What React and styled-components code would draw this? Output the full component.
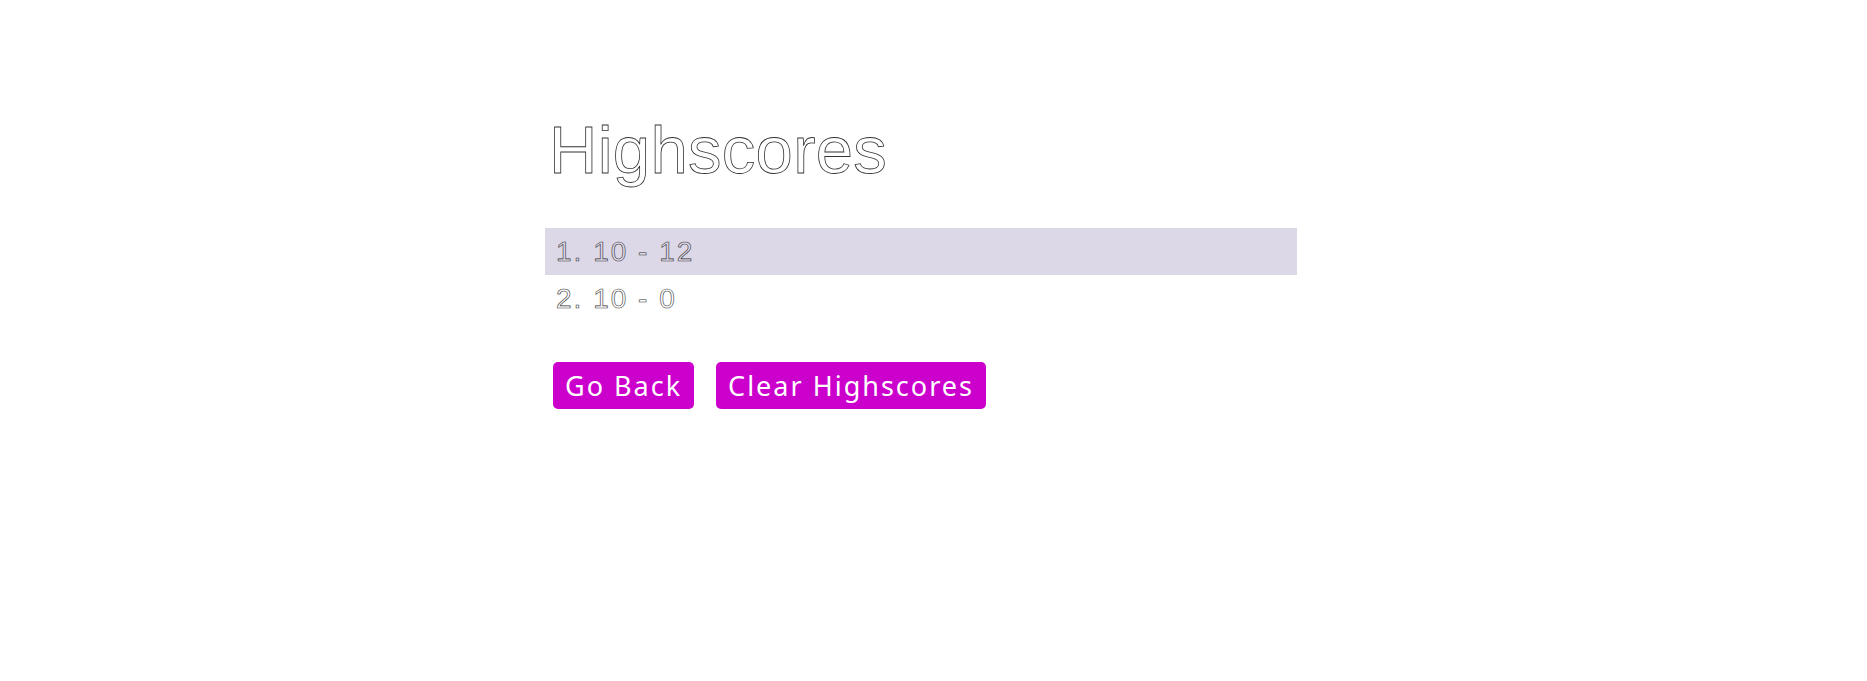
import React from 'react'
import styled, { createGlobalStyle } from 'styled-components'

const GlobalStyle = createGlobalStyle`
    body {
        margin: 0;
        background: #fff;
        font-family: "Liberation Sans", Arial, sans-serif;
    }
`

const Page = styled.div`
    display: flex;
    flex-direction: column;
    padding: 0 570px 0 545px;
    height: 681px;
    box-sizing: border-box;
`

const Title = styled.h1`
    margin: 112px 0 0 4px;
    font-size: 67px;
    font-weight: normal;
    line-height: 76px;
    letter-spacing: 0.3px;
    color: #fff;
    -webkit-text-stroke: 0.8px #333;
`

const List = styled.ol`
    list-style: none;
    margin: 40px 0 0 0;
    padding: 0;
`

const Row = styled.li`
    height: 47px;
    display: flex;
    align-items: center;
    padding-left: 11px;
    font-size: 28px;
    letter-spacing: 2px;
    color: transparent;
    -webkit-text-stroke: 0.6px #333;
    background: ${props => props.shaded ? '#ddd8e8' : 'transparent'};
`

const Buttons = styled.div`
    display: flex;
    gap: 22px;
    margin: 40px 0 0 8px;
`

const Button = styled.button`
    height: 47px;
    padding: 0 12px;
    border: none;
    border-radius: 5px;
    background: #cc00cc;
    color: #fff;
    font-family: "Comic Sans MS", "Noto Sans", sans-serif;
    font-size: 27px;
    letter-spacing: 2px;
    cursor: pointer;
`

const scores = [
    { initials: '10', score: 12 },
    { initials: '10', score: 0 },
]

function App() {
    return (
        <>
            <GlobalStyle />
            <Page>
                <Title>Highscores</Title>
                <List>
                    {scores.map((s, i) => (
                        <Row key={i} shaded={i % 2 === 0}>
                            {i + 1}. {s.initials} - {s.score}
                        </Row>
                    ))}
                </List>
                <Buttons>
                    <Button>Go Back</Button>
                    <Button>Clear Highscores</Button>
                </Buttons>
            </Page>
        </>
    )
}

export default App
